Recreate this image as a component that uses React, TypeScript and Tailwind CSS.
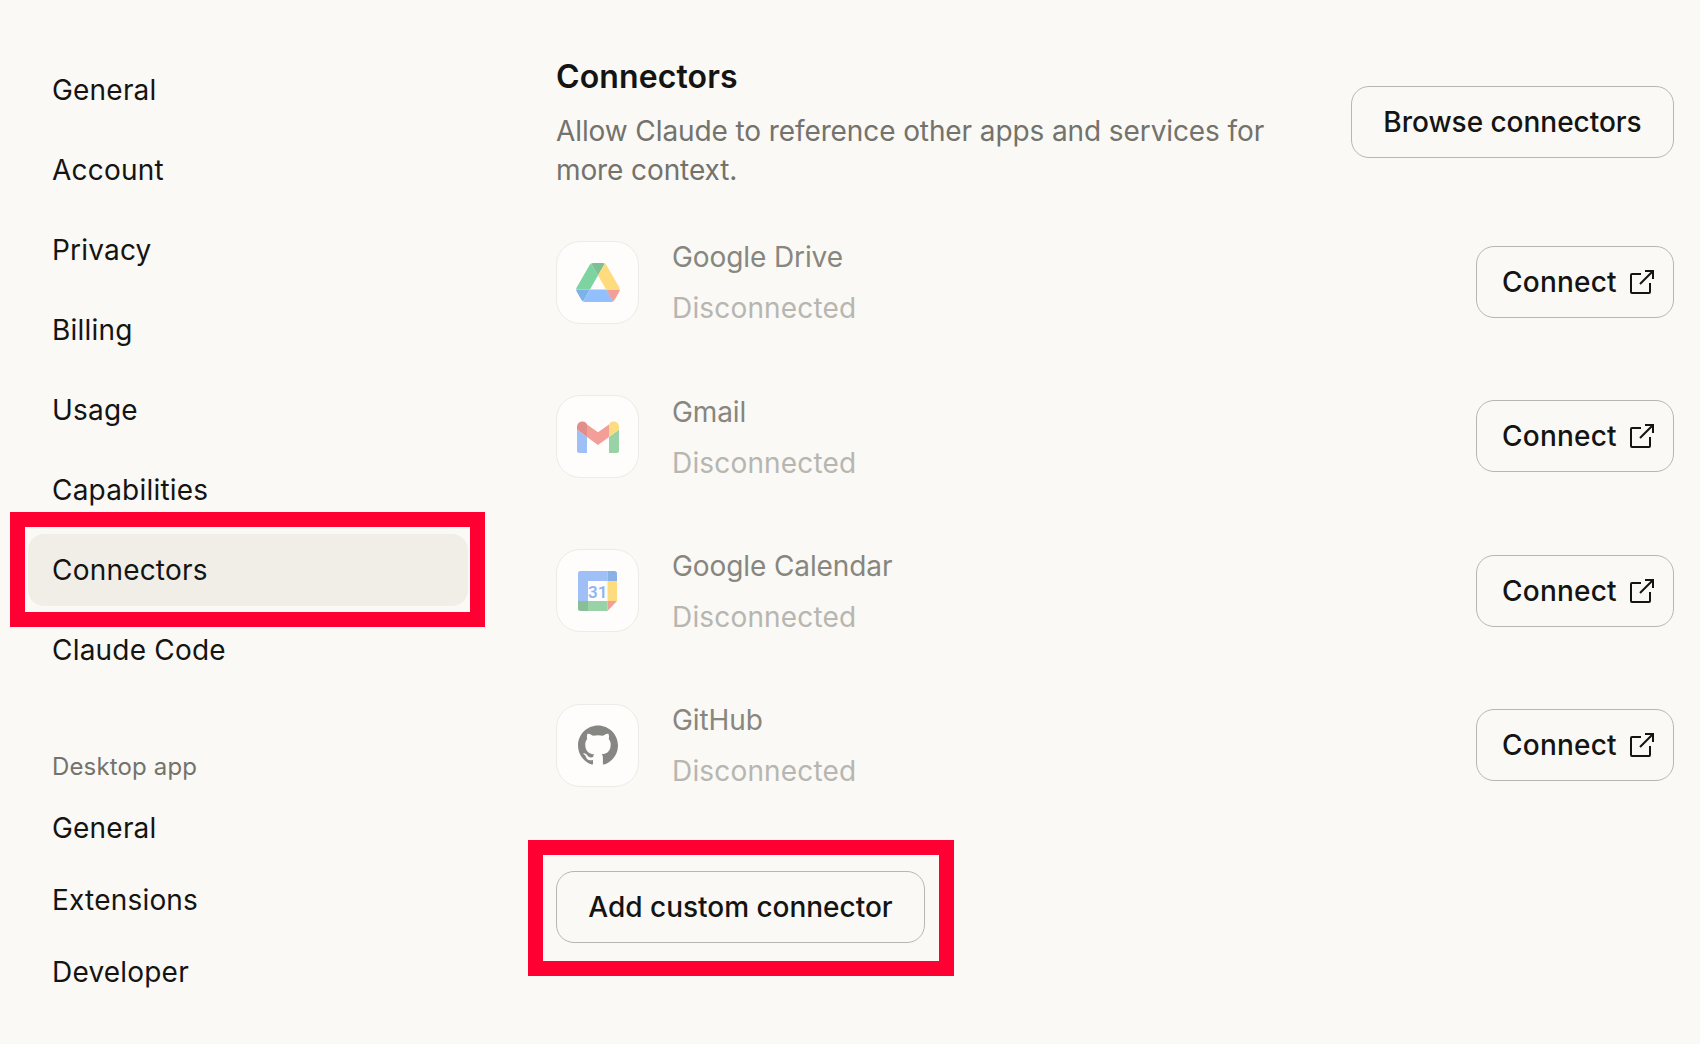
import { ReactNode } from "react";
import { SiGithub } from "react-icons/si";

const topItems = ["General", "Account", "Privacy", "Billing", "Usage", "Capabilities", "Connectors", "Claude Code"];
const desktopItems = ["General", "Extensions", "Developer"];

const DriveIcon = () => (
  <svg viewBox="0 0 87.3 78" className="w-[44px] h-[39px] opacity-50">
    <path d="m6.6 66.85 3.85 6.65c.8 1.4 1.95 2.5 3.3 3.3l13.75-23.8h-27.5c0 1.55.4 3.1 1.2 4.5z" fill="#0066da" />
    <path d="m43.65 25-13.75-23.8c-1.35.8-2.5 1.9-3.3 3.3l-25.4 44a9.06 9.06 0 0 0 -1.2 4.5h27.5z" fill="#00ac47" />
    <path d="m73.55 76.8c1.35-.8 2.5-1.9 3.3-3.3l1.6-2.75 7.65-13.25c.8-1.4 1.2-2.95 1.2-4.5h-27.502l5.852 11.5z" fill="#ea4335" />
    <path d="m43.65 25 13.75-23.8c-1.35-.8-2.9-1.2-4.5-1.2h-18.5c-1.6 0-3.15.45-4.5 1.2z" fill="#00832d" />
    <path d="m59.8 53h-32.3l-13.75 23.8c1.35.8 2.9 1.2 4.5 1.2h50.8c1.6 0 3.15-.45 4.5-1.2z" fill="#2684fc" />
    <path d="m73.4 26.5-12.7-22c-.8-1.4-1.95-2.5-3.3-3.3l-13.75 23.8 16.15 28h27.45c0-1.55-.4-3.1-1.2-4.5z" fill="#ffba00" />
  </svg>
);

const GmailIcon = () => (
  <svg viewBox="0 0 42 32" className="w-[42px] h-[32px] opacity-50">
    <path d="M0 8.5V29.5a2.5 2.5 0 0 0 2.5 2.5H10V16z" fill="#4285f4" />
    <path d="M42 8.5V29.5a2.5 2.5 0 0 1-2.5 2.5H32V16z" fill="#34a853" />
    <path d="M10 3.5 21 11.3 32 3.5V16L21 24 10 16z" fill="#ea4335" />
    <path d="M0 6C0 1.2 5-1.2 9 1.8L10 3.5V16L0 8.5z" fill="#c5221f" />
    <path d="M42 6C42 1.2 37-1.2 33 1.8L32 3.5V16L42 8.5z" fill="#fbbc04" />
  </svg>
);

const CalendarIcon = () => (
  <svg viewBox="0 0 39 40" className="w-[39px] h-[40px]">
    <g className="opacity-50">
      <path d="M2.5 0H29.5V10H10V30H0V2.5A2.5 2.5 0 0 1 2.5 0z" fill="#4285f4" />
      <path d="M29.5 0H36.5A2.5 2.5 0 0 1 39 2.5V10H29.5z" fill="#1967d2" />
      <rect x="29.5" y="10" width="9.5" height="20" fill="#fbbc04" />
      <path d="M10 30H29.5V40H10z" fill="#34a853" />
      <path d="M0 30H10V40H2.5A2.5 2.5 0 0 1 0 37.5z" fill="#188038" />
      <path d="M29.5 30H39L29.5 40z" fill="#ea4335" />
    </g>
    <text x="19.7" y="26.5" textAnchor="middle" fontSize="17" fontWeight="600" fill="#8fb4f5" fontFamily="Roboto, sans-serif">
      31
    </text>
  </svg>
);

const ExternalIcon = () => (
  <svg viewBox="0 0 24 24" fill="none" stroke="currentColor" strokeWidth="2" className="w-[24px] h-[24px] shrink-0">
    <path d="M11 4H2a1 1 0 0 0-1 1v17a1 1 0 0 0 1 1h17a1 1 0 0 0 1-1v-9" />
    <path d="M10 14 23 1M15 1h8v8" />
  </svg>
);

const connectors: { name: string; icon: ReactNode }[] = [
  { name: "Google Drive", icon: <DriveIcon /> },
  { name: "Gmail", icon: <GmailIcon /> },
  { name: "Google Calendar", icon: <CalendarIcon /> },
  { name: "GitHub", icon: <SiGithub className="w-[40px] h-[40px] text-[#868683]" /> },
];

const NavItem = ({ label, active }: { label: string; active?: boolean }) => (
  <div className="relative">
    <div className={`flex items-center h-[72px] pl-[24px] rounded-[16px] ${active ? "bg-[#f0eee6]" : ""}`}>
      {label}
    </div>
    {active && <div className="absolute -left-[18px] -top-[22px] -right-[17px] -bottom-[21px] border-[15px] border-[#ff0033]" />}
  </div>
);

const App = () => {
  return (
    <div className="flex w-[1700px] h-[1044px] overflow-hidden bg-[#faf9f5] text-[#141413] font-['Inter',sans-serif] text-[28px]">
      <div className="w-[440px] ml-[28px] pt-[54px] shrink-0 tracking-[0.2px]">
        <div className="flex flex-col gap-[8px]">
          {topItems.map((item) => (
            <NavItem key={item} label={item} active={item === "Connectors"} />
          ))}
        </div>
        <div className="mt-[65px] mb-[9px] pl-[24px] text-[24px] leading-[32px] tracking-[0.15px] text-[#73726c]">Desktop app</div>
        <div className="flex flex-col">
          {desktopItems.map((item) => (
            <NavItem key={item} label={item} />
          ))}
        </div>
      </div>

      <div className="flex-1 ml-[88px] mr-[26px] pt-[56px]">
        <div className="flex justify-between items-start">
          <div className="w-[730px]">
            <div className="text-[32px] leading-[42px] font-semibold tracking-[0.11px]">Connectors</div>
            <div className="mt-[14px] text-[#73726c] leading-[39px] tracking-[-0.1px]">
              Allow Claude to reference other apps and services for more context.
            </div>
          </div>
          <button className="mt-[30px] h-[72px] w-[323px] rounded-[18px] border border-[#b8b6ae] font-[450] tracking-[-0.03px]">
            Browse connectors
          </button>
        </div>

        <div className="mt-[51px] flex flex-col gap-[72px]">
          {connectors.map((c) => (
            <div key={c.name} className="flex items-center h-[82.33px]">
              <div className="w-[83px] h-[83px] shrink-0 flex items-center justify-center bg-white/70 border border-[#ecebe5] rounded-[24px]">
                {c.icon}
              </div>
              <div className="ml-[33px] pt-[2px] flex-1">
                <div className="text-[#87867f] leading-[51px] tracking-[-0.1px]">{c.name}</div>
                <div className="text-[#b7b6b0] leading-[51px] tracking-[0.17px]">Disconnected</div>
              </div>
              <button className="flex items-center gap-[13px] h-[72px] w-[198px] pl-[25px] rounded-[18px] border border-[#b8b6ae] font-[450] tracking-[0.22px]">
                Connect
                <ExternalIcon />
              </button>
            </div>
          ))}
        </div>

        <div className="relative mt-[85px] w-[369px]">
          <button className="h-[72px] w-[369px] rounded-[18px] border border-[#b8b6ae] font-[450] tracking-[-0.02px]">
            Add custom connector
          </button>
          <div className="absolute -left-[28px] -top-[31px] -right-[29px] -bottom-[33px] border-[15px] border-[#ff0033]" />
        </div>
      </div>
    </div>
  );
};

export default App;
